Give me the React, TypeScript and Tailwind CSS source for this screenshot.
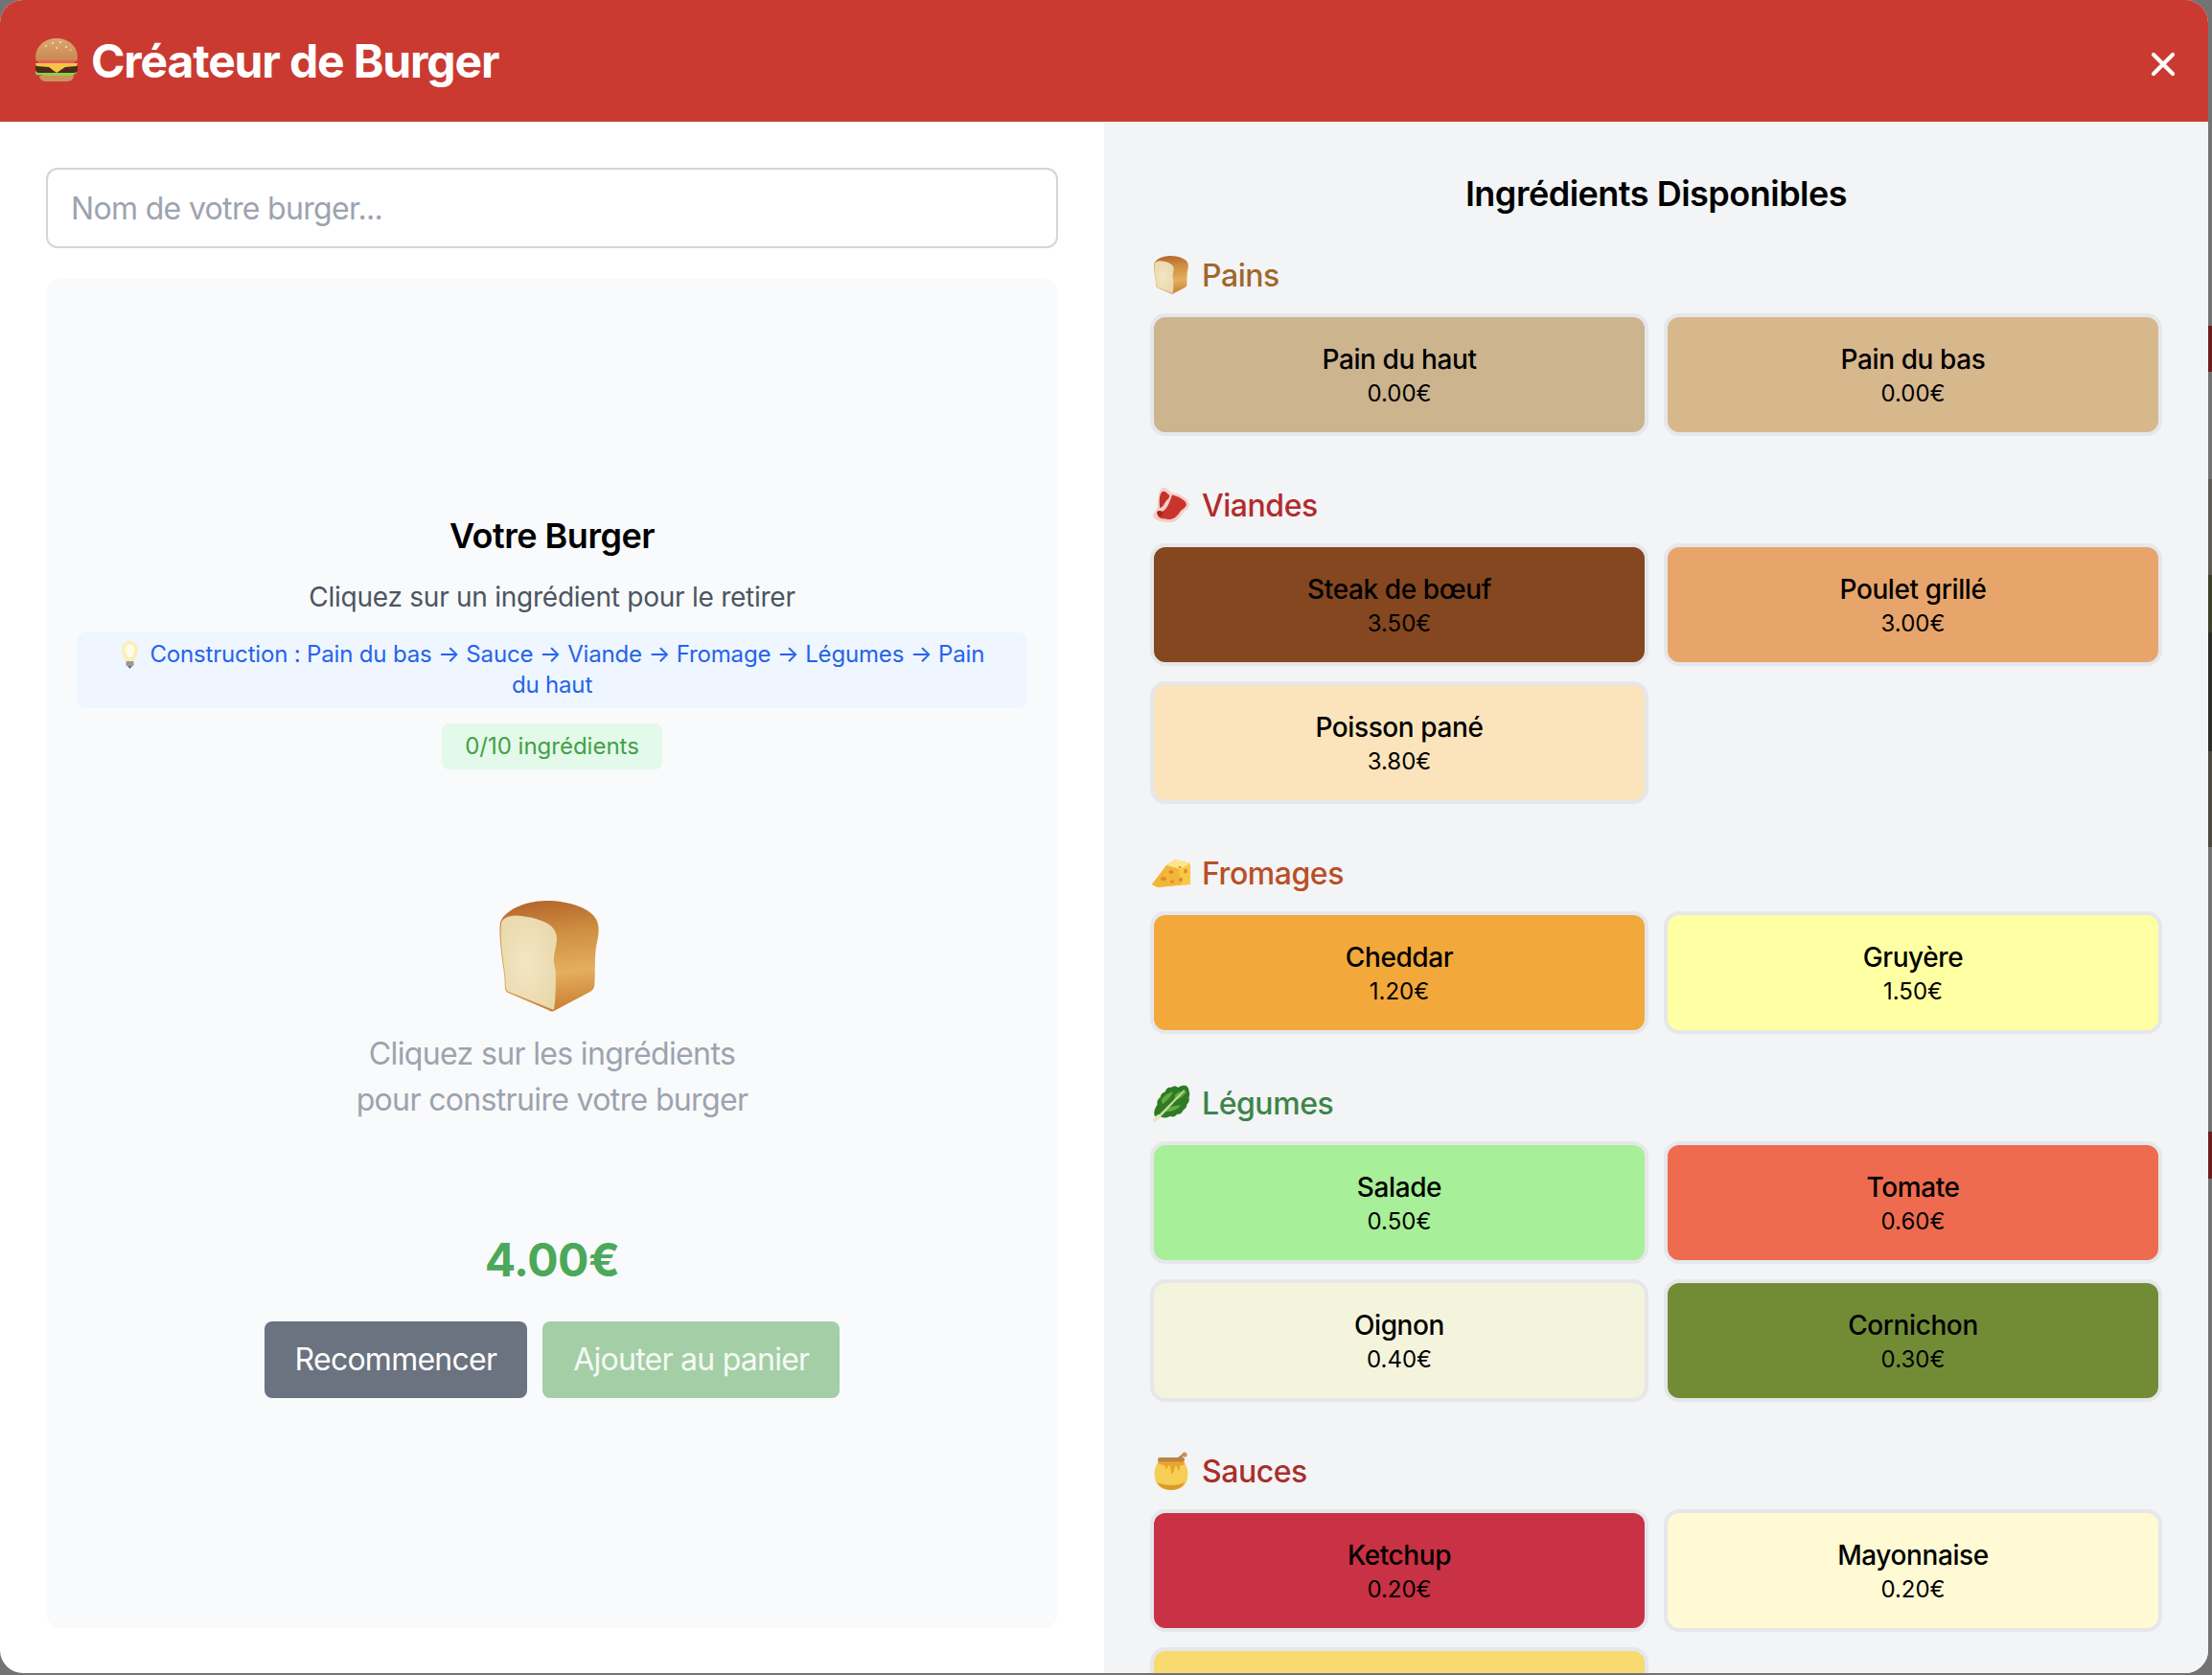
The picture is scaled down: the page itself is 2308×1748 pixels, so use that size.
const categories = [
  {
    name: 'Pains',
    icon: 'bread',
    color: 'text-[#a0682a]',
    items: [
      { name: 'Pain du haut', price: '0.00€', bg: 'bg-[#ccb48f]' },
      { name: 'Pain du bas', price: '0.00€', bg: 'bg-[#d7b78c]' },
    ],
  },
  {
    name: 'Viandes',
    icon: 'meat',
    color: 'text-[#b22c2c]',
    items: [
      { name: 'Steak de bœuf', price: '3.50€', bg: 'bg-[#85471f]' },
      { name: 'Poulet grillé', price: '3.00€', bg: 'bg-[#e7a56b]' },
      { name: 'Poisson pané', price: '3.80€', bg: 'bg-[#fbe4bb]' },
    ],
  },
  {
    name: 'Fromages',
    icon: 'cheese',
    color: 'text-[#b84f25]',
    items: [
      { name: 'Cheddar', price: '1.20€', bg: 'bg-[#f2a83b]' },
      { name: 'Gruyère', price: '1.50€', bg: 'bg-[#ffffa3]' },
    ],
  },
  {
    name: 'Légumes',
    icon: 'lettuce',
    color: 'text-[#3c8549]',
    items: [
      { name: 'Salade', price: '0.50€', bg: 'bg-[#a7ef98]' },
      { name: 'Tomate', price: '0.60€', bg: 'bg-[#ee6b50]' },
      { name: 'Oignon', price: '0.40€', bg: 'bg-[#f4f4dd]' },
      { name: 'Cornichon', price: '0.30€', bg: 'bg-[#728c36]' },
    ],
  },
  {
    name: 'Sauces',
    icon: 'honey',
    color: 'text-[#a92f2a]',
    items: [
      { name: 'Ketchup', price: '0.20€', bg: 'bg-[#c93144]' },
      { name: 'Mayonnaise', price: '0.20€', bg: 'bg-[#fffad3]' },
      { name: 'Moutarde', price: '0.30€', bg: 'bg-[#f9da70]' },
    ],
  },
];

function BurgerIcon() {
  return (
    <svg width="46" height="45" viewBox="0 0 46 45" className="mt-[-2px] shrink-0">
      <defs>
        <linearGradient id="bun" x1="0" y1="0" x2="0" y2="1">
          <stop offset="0" stopColor="#dba672" />
          <stop offset="1" stopColor="#c9884f" />
        </linearGradient>
      </defs>
      <path d="M1 20C1 8 11 0 23 0s22 8 22 20c0 3-1 4-3 4H4c-2 0-3-1-3-4z" fill="url(#bun)" />
      <g fill="#f3e3c4">
        <circle cx="12" cy="8" r="1" />
        <circle cx="19" cy="5" r="1" />
        <circle cx="27" cy="4" r="1" />
        <circle cx="33" cy="9" r="1" />
        <circle cx="23" cy="10" r="1" />
        <circle cx="38" cy="12" r="0.8" />
      </g>
      <rect x="4" y="23" width="38" height="4" rx="2" fill="#e2645c" />
      <path d="M1 37c3 3 5 0 8 2s5-1 8 1 5-1 8 0 5-1 8 0 5 1 7-1 3-2 4-3V33H1z" fill="#8fce4a" />
      <rect x="1" y="27" width="44" height="9" rx="4" fill="#4a2a1c" />
      <path d="M1 26h44l-1 3-12 1-9 6-8-6-13-1z" fill="#f6c545" />
      <path d="M5 39h36c0 3-3 6-7 6H12c-4 0-7-3-7-6z" fill="#d0915c" />
    </svg>
  );
}

function BreadIcon({ width, height, id }: { width: number; height: number; id: string }) {
  return (
    <svg width={width} height={height} viewBox="0 0 106 118" className="shrink-0">
      <defs>
        <linearGradient id={id} x1="0.5" y1="0" x2="0.6" y2="1">
          <stop offset="0" stopColor="#b5682c" />
          <stop offset="0.3" stopColor="#d08f43" />
          <stop offset="0.65" stopColor="#e4ae5e" />
          <stop offset="1" stopColor="#c97f32" />
        </linearGradient>
        <radialGradient id={`${id}-face`} cx="0.45" cy="0.5" r="0.7">
          <stop offset="0" stopColor="#f3e6c4" />
          <stop offset="1" stopColor="#e8d6a8" />
        </radialGradient>
      </defs>
      <path d="M1 24C3 12 26 0 50 0c24 0 49 8 54 22 3 8 1 16-1 26-2 12-1 34-2 42 0 3-2 5-5 7L60 116c-3 2-5 2-8 0L10 98c-3-1-4-3-4-7 0-14-3-25-4-38-1-10-2-20-1-29z" fill={`url(#${id})`} />
      <path d="M2 25c0-5 5-8 12-9 10-1 28 3 37 8 7 4 11 11 10 19-1 8-3 13-3 20 0 6 2 9 2 15 0 12 0 26-2 38L11 97c-3-1-4-3-4-6 0-14-3-25-4-38-1-10-2-19-1-28z" fill={`url(#${id}-face)`} />
    </svg>
  );
}

function MeatIcon() {
  return (
    <svg width="40" height="38" viewBox="0 0 36 36" className="shrink-0">
      <path d="M8 2c3-3 6 0 9 3 3 2 6 1 10 3 3 2 9 5 9 9 0 5-5 6-7 10-3 5-8 9-14 8-5 0-11-1-14-4-2-3 0-5 2-8 3-4 1-16 5-21z" fill="#f3d0c8" />
      <path d="M9 5c3-2 5 2 7 3 1 2-1 4-3 6-2 3-3 6-6 7-1-6-1-13 2-16z" fill="#c5302a" />
      <path d="M19 8c4 1 13 4 14 9 0 4-5 5-7 9-3 4-7 7-12 6-4 0-8-1-9-3-1-3 2-3 5-5 5-3 7-11 9-16z" fill="#c9352d" />
      <path d="M5 24c2-1 5 0 5 2s-2 4-4 3-3-4-1-5z" fill="#a8251f" />
    </svg>
  );
}

function CheeseIcon() {
  return (
    <svg width="40" height="30" viewBox="0 0 40 30" className="shrink-0">
      <path d="M0 27 15 7 24 1l16 4v22L6 30z" fill="#f8c847" />
      <path d="M15 7 24 1l16 4-11 6z" fill="#fde58a" />
      <path d="M0 27 15 7l14 4c-1 5 0 11 2 16L6 30z" fill="#f2b638" />
      <g fill="#e08a2c">
        <ellipse cx="12" cy="21" rx="3" ry="2" />
        <ellipse cx="20" cy="14" rx="2.500" ry="2" />
        <ellipse cx="29" cy="9" rx="1.500" ry="1" />
        <ellipse cx="35" cy="13" rx="1.800" ry="2.500" />
        <ellipse cx="30" cy="22" rx="2" ry="2.200" />
        <ellipse cx="21" cy="24" rx="2" ry="1.500" />
      </g>
    </svg>
  );
}

function LettuceIcon() {
  return (
    <svg width="40" height="40" viewBox="1 1 38 39" className="shrink-0">
      <path d="M3 33c-1-4 1-8 3-11-1-3 1-6 3-7 0-3 2-5 5-6 1-3 3-5 6-4 2-2 5-2 7 0 2-2 5-3 8-2 2 1 3 3 3 5 1 2 1 5 0 7 1 3 0 5-2 7 0 3-2 5-4 6-1 3-3 4-6 4-2 3-5 3-7 2-3 2-6 2-9 1-3 1-5 1-7-2z" fill="#2f7a25" />
      <path d="M10 17c3-4 7-7 12-8-2 5-6 9-11 13zM24 12c4-3 8-4 12-3-3 4-8 8-13 9zM14 27c5-3 10-4 16-4-4 5-10 7-16 6z" fill="#63ab3f" />
      <path d="M2 38 33 7l1 1L8 36z" fill="#c8dd9c" />
      <path d="M1 37l6-5 3 3-6 5-2-1z" fill="#e8e6c2" />
    </svg>
  );
}

function HoneyIcon() {
  return (
    <svg width="36" height="40" viewBox="0 0 36 40" className="shrink-0">
      <path d="M23 9 31 3" stroke="#b57f4f" strokeWidth="2.500" />
      <circle cx="32" cy="3" r="2.600" fill="#c6935f" />
      <path d="M5 10C1 15 0 21 1 27c1 9 8 13 17 13s16-4 17-13c1-6 0-12-4-17z" fill="#f6cd55" />
      <path d="M3 32c3 5 9 8 15 8s12-3 14-8c-4 2-9 3-14 3s-11-1-15-3z" fill="#dc9a2a" />
      <path d="M5 9c4-2 22-2 26 0l1 4c-1 1-3 1-4 1s-1 6-2 6-2-6-3-6-2 9-4 9-1-9-3-9-2 4-3 4-1-4-3-4-4-1-6-2z" fill="#e8a52d" />
      <rect x="4" y="6" width="28" height="4.500" rx="2.200" fill="#b98543" />
    </svg>
  );
}

function BulbIcon() {
  return (
    <svg width="21" height="29" viewBox="0 0 21 29" className="mr-1 inline-block align-[-7px]">
      <path d="M10.500 0C15.500 0 19 4.500 19 9.500c0 4-3 7-4 12H6c-1-5-4-8-4-12C2 4.500 5.500 0 10.500 0z" fill="#fcefb4" />
      <path d="M10.500 3c3 0 5 3 5 6s-2 5-3 8h-4c-1-3-3-5-3-8s2-6 5-6z" fill="#fffbe8" />
      <rect x="6.500" y="21" width="8" height="5" rx="1" fill="#9a9a96" />
      <path d="M8 26h5l-2.500 3z" fill="#6b6b68" />
    </svg>
  );
}

function CategoryIcon({ name }: { name: string }) {
  if (name === 'bread') return <BreadIcon width={36} height={40} id="crust-small" />;
  if (name === 'meat') return <MeatIcon />;
  if (name === 'cheese') return <CheeseIcon />;
  if (name === 'lettuce') return <LettuceIcon />;
  return <HoneyIcon />;
}

export default function App() {
  return (
    <div className="flex h-screen w-full overflow-hidden bg-[#737373] font-['Inter',sans-serif] text-black">
      {/* Modal */}
      <div className="flex h-[1746px] w-[2304px] shrink-0 flex-col overflow-hidden rounded-[24px] bg-white">
        <header className="flex h-[127px] shrink-0 items-center justify-between bg-[#ca3a31] pl-[36px] pr-[27px] text-white">
          <div className="flex items-center gap-[13px]">
            <BurgerIcon />
            <h1 className="text-[48px] font-bold tracking-[-1.15px]">Créateur de Burger</h1>
          </div>
          <svg width="40" height="40" viewBox="0 0 24 24" fill="none" stroke="currentColor" strokeWidth="2.500" strokeLinecap="round" className="mt-[7px]">
            <path d="M18 6 6 18M6 6l12 12" />
          </svg>
        </header>

        <div className="flex min-h-0 flex-1">
          {/* Burger en construction */}
          <div className="flex w-[1152px] shrink-0 flex-col px-12 pb-[47px] pt-12">
            <input
              type="text"
              placeholder="Nom de votre burger..."
              className="mb-8 h-[84px] w-full shrink-0 rounded-xl border-2 border-[#d1d5db] bg-white px-6 text-[32px] tracking-[-0.67px] outline-none placeholder:text-[#9ca3af]"
            />
            <div className="flex min-h-0 flex-1 flex-col items-center justify-center rounded-2xl bg-[#f9fafb] px-8">
              <h2 className="mb-4 text-[36px] leading-[56px] font-semibold tracking-[-0.5px]">Votre Burger</h2>
              <p className="mb-4 text-[28px] leading-[40px] tracking-[-0.25px] text-[#4b5563]">Cliquez sur un ingrédient pour le retirer</p>
              <div className="w-full rounded-xl bg-[#eff6ff] px-8 py-2 text-center text-[24px] leading-[32px] tracking-[-0.17px] text-[#2563eb]">
                <BulbIcon /> Construction : Pain du bas → Sauce → Viande → Fromage → Légumes → Pain du haut
              </div>
              <span className="mt-4 rounded-lg bg-[#e3f9e9] px-6 py-2 text-[24px] leading-[32px] text-[#43a047]">0/10 ingrédients</span>

              <div className="mt-[137px] mb-[20px] mr-[6px]">
                <BreadIcon width={106} height={116} id="crust-big" />
              </div>
              <p className="text-center text-[32px] leading-[48px] tracking-[-0.65px] text-[#9ca3af]">
                Cliquez sur les ingrédients
                <br />
                pour construire votre burger
              </p>

              <div className="mt-[111px] mb-8 text-[48px] leading-[64px] font-bold tracking-[-0.5px] text-[#4ca85a]">4.00€</div>
              <div className="flex gap-4">
                <button className="h-20 rounded-lg bg-[#6b7280] px-8 text-[32px] tracking-[-0.75px] text-white">Recommencer</button>
                <button className="h-20 rounded-lg bg-[#a3cea6] px-8 text-[32px] tracking-[-0.75px] text-white/90">Ajouter au panier</button>
              </div>
            </div>
          </div>

          {/* Ingrédients */}
          <div className="w-[1152px] shrink-0 overflow-hidden bg-[#f3f4f6] px-12 pt-[47px]">
            <h2 className="mb-[33px] text-center text-[36px] leading-[56px] font-semibold tracking-[-0.5px]">Ingrédients Disponibles</h2>
            {categories.map((cat) => (
              <section key={cat.name} className="mb-12">
                <div className={`mb-4 flex h-12 items-center gap-[13px] pl-[2px] text-[32px] font-medium tracking-[-0.45px] ${cat.color}`}>
                  <span className="flex w-[39px] justify-center">
                    <CategoryIcon name={cat.icon} />
                  </span>
                  <span className="pt-[2px]">{cat.name}</span>
                </div>
                <div className="grid grid-cols-2 gap-4">
                  {cat.items.map((item) => (
                    <button key={item.name} className={`h-32 rounded-2xl border-4 border-[#e5e7eb] text-center ${item.bg}`}>
                      <div className="text-[28px] leading-[40px] font-medium tracking-[-0.4px]">{item.name}</div>
                      <div className="text-[24px] leading-[32px]">{item.price}</div>
                    </button>
                  ))}
                </div>
              </section>
            ))}
          </div>
        </div>
      </div>

      {/* Page derrière le modal, visible sur le bord droit */}
      <div className="flex w-1 shrink-0 flex-col">
        <div className="h-[340px] bg-[#737373]" />
        <div className="h-[48px] bg-[#6b1d1d]" />
        <div className="h-[112px] bg-[#747474]" />
        <div className="h-[100px] bg-[#5c5c55]" />
        <div className="h-[60px] bg-[#3c4028]" />
        <div className="h-[124px] bg-[#2c2c28]" />
        <div className="h-[100px] bg-[#4a4a40]" />
        <div className="h-[297px] bg-[#737373]" />
        <div className="h-[49px] bg-[#6b1d1d]" />
      </div>
    </div>
  );
}
